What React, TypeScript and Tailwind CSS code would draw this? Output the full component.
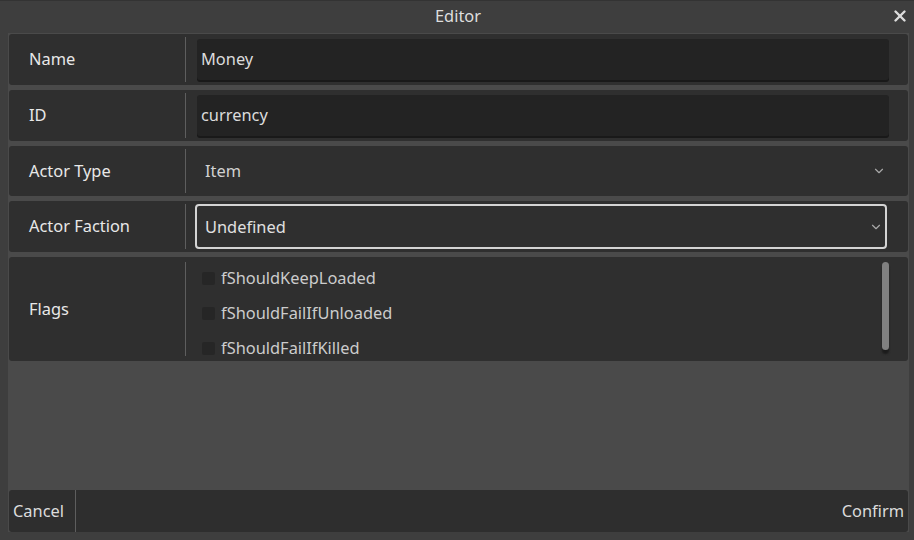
import { X, ChevronDown } from 'lucide-react';

const font = { fontFamily: '"Noto Sans", "Open Sans", sans-serif' };

function Row({ label, children, tall }: { label: string; children: React.ReactNode; tall?: boolean }) {
  return (
    <div className={`flex rounded-[3px] bg-[#2f2f2f] ${tall ? 'h-[104px]' : 'h-[50.75px]'}`}>
      <div className="w-[176px] flex items-center pl-[20px] text-[16.4px] text-[#e8e8e8]">{label}</div>
      <div className={`w-px bg-[#5e5e5e] ${tall ? 'my-[5px]' : 'my-[3px]'}`} />
      <div className="flex-1 flex items-center pl-[11px] pr-[19px]">{children}</div>
    </div>
  );
}

function Flag({ name }: { name: string }) {
  return (
    <div className="h-[35px] flex items-center gap-[6px] pl-[5px]">
      <span className="w-[13px] h-[13px] rounded-[2px] bg-[#262626]" />
      <span className="text-[16.4px] text-[#cccccc]">{name}</span>
    </div>
  );
}

export default function App() {
  return (
    <div className="w-[914px] h-[540px] bg-[#3e3e3e] flex flex-col overflow-hidden" style={font}>
      {/* Title bar */}
      <div className="h-[33px] flex items-center border-t border-[#333333] pb-[2px]">
        <div className="w-[30px]" />
        <div className="flex-1 text-center text-[16.4px] text-[#dedede] pl-[2px]">Editor</div>
        <div className="w-[30px] flex justify-center pl-[2px]">
          <X size={18} strokeWidth={3.2} className="text-[#dcdcdc]" />
        </div>
      </div>

      {/* Body */}
      <div className="flex-1 ml-[8px] mr-[5px] mb-[8px] bg-[#4a4a4a] flex flex-col px-[1px] pt-[1px]">
        <div className="flex flex-col gap-[5px]">
          <Row label="Name">
            <div className="w-full h-[41px] rounded-[3px] bg-[#232323] shadow-[0_2px_0_#191919] flex items-center pl-[4px] text-[16.4px] text-[#dcdcdc]">
              Money
            </div>
          </Row>
          <Row label="ID">
            <div className="w-full h-[41px] rounded-[3px] bg-[#232323] shadow-[0_2px_0_#191919] flex items-center pl-[4px] text-[16.4px] text-[#dcdcdc]">
              currency
            </div>
          </Row>
          <Row label="Actor Type">
            <div className="w-full h-[45px] flex items-center justify-between pl-[8px] pr-[3px] text-[16.4px] text-[#d2d2d2]">
              <span>Item</span>
              <ChevronDown size={14} strokeWidth={2} className="text-[#a8a8a8]" />
            </div>
          </Row>
          <Row label="Actor Faction">
            <div className="w-full h-[45px] -mr-[1px] -ml-[2px] rounded-[4px] border-2 border-[#d4d4d4] flex items-center justify-between pl-[8px] pr-[2px] pt-[1px] text-[16.4px] text-[#e0e0e0]">
              <span>Undefined</span>
              <ChevronDown size={14} strokeWidth={2} className="text-[#a8a8a8]" />
            </div>
          </Row>
          <Row label="Flags" tall>
            <div className="w-full h-full flex">
              <div className="flex-1 pt-[4px]">
                <Flag name="fShouldKeepLoaded" />
                <Flag name="fShouldFailIfUnloaded" />
                <Flag name="fShouldFailIfKilled" />
              </div>
              <div className="w-[7px] pt-[5px]">
                <div className="w-[7px] h-[88px] rounded-full bg-[#808080] shadow-[0_4px_2px_#1c1c1c]" />
              </div>
            </div>
          </Row>
        </div>

        <div className="flex-1" />

        {/* Bottom bar */}
        <div className="h-[42px] flex rounded-[3px] bg-[#2e2e2e] text-[16.4px] text-[#dcdcdc]">
          <div className="w-[66px] flex items-center pl-[4px] pt-[1px]">Cancel</div>
          <div className="w-px bg-[#5e5e5e]" />
          <div className="flex-1 flex items-center justify-end pr-[4px] pt-[1px]">Confirm</div>
        </div>
      </div>
    </div>
  );
}
